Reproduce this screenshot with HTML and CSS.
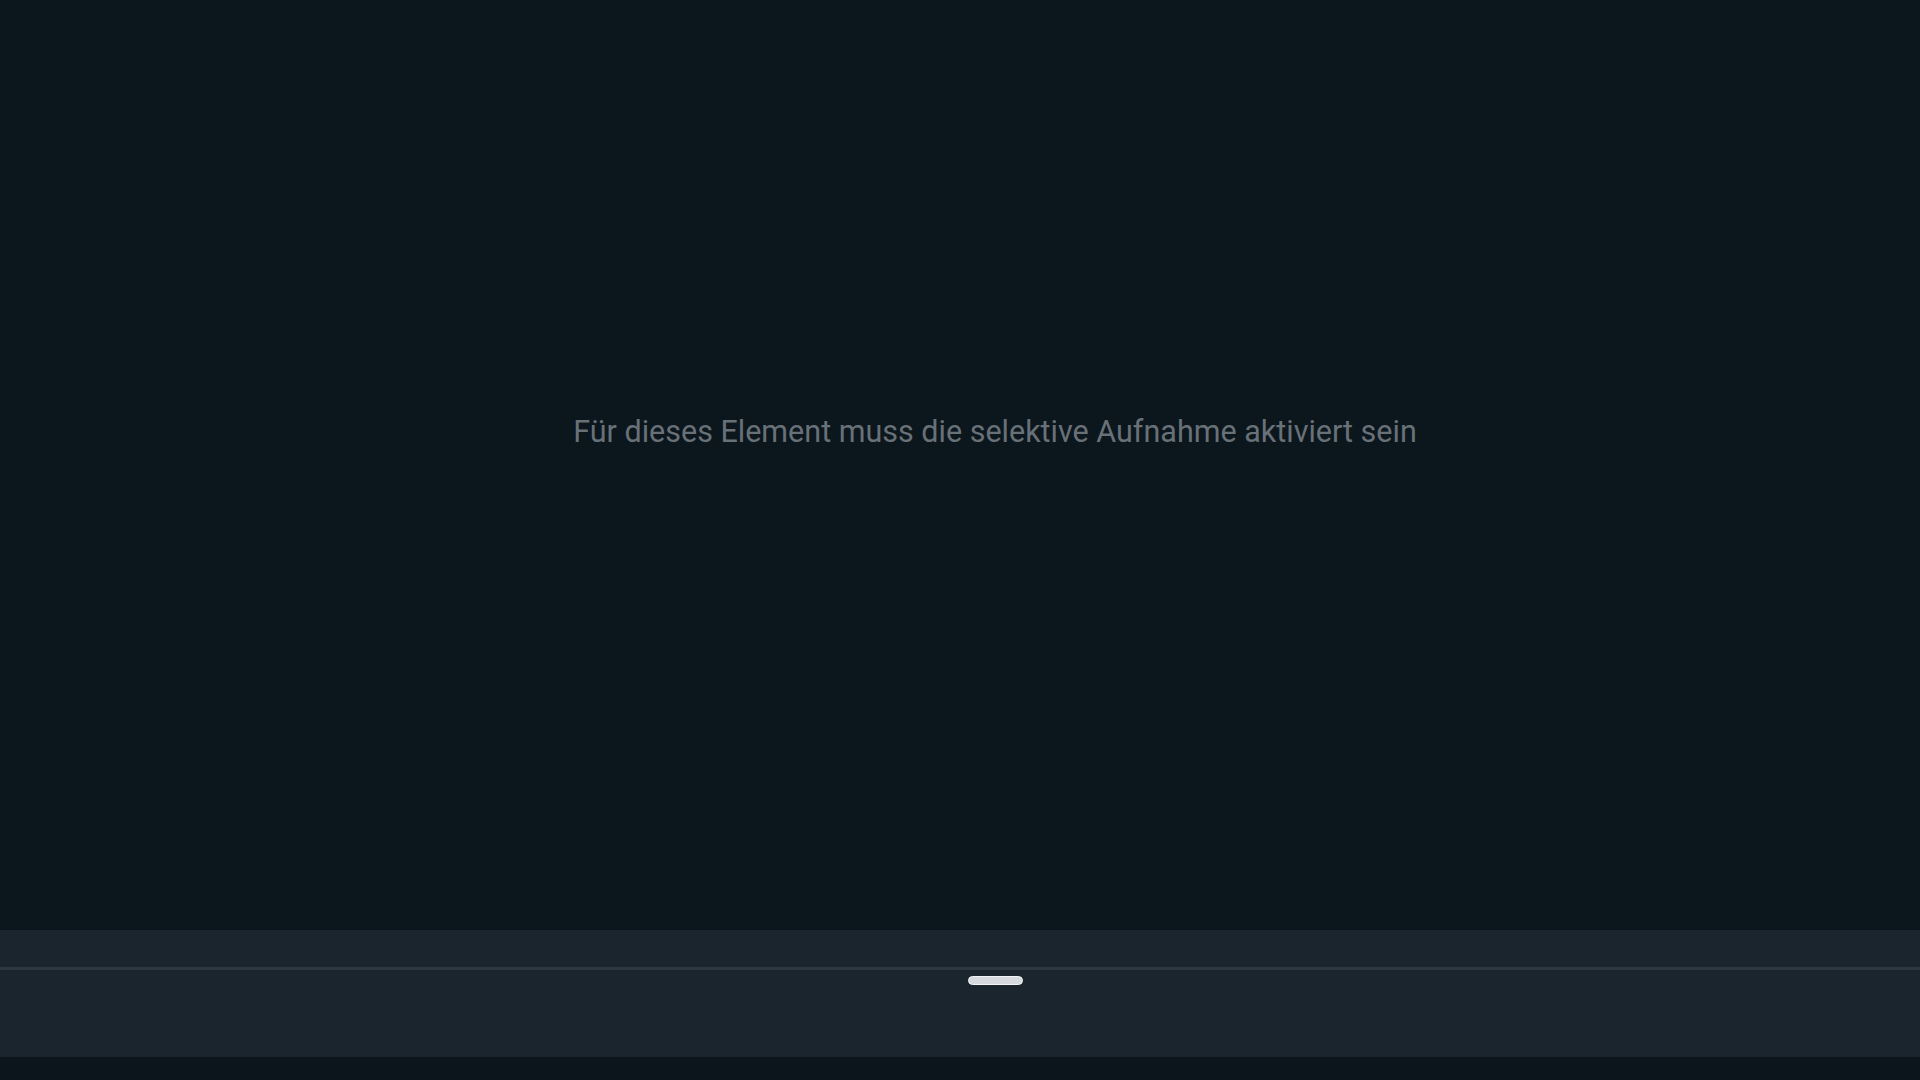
FILE: index.html
```html
<!DOCTYPE html>
<html lang="de">
<head>
<meta charset="utf-8">
<title>Selektive Aufnahme</title>
<link rel="stylesheet" href="styles.css">
</head>
<body>
<div class="screen">
  <main class="content">
    <p class="message">Für dieses Element muss die selektive Aufnahme aktiviert sein</p>
  </main>
  <section class="sheet">
    <div class="sheet-top"></div>
    <div class="sheet-divider"></div>
    <div class="sheet-body">
      <div class="handle"></div>
    </div>
  </section>
  <div class="bottom-strip"></div>
</div>
</body>
</html>
```
FILE: styles.css
```css
* { box-sizing: border-box; }
html, body {
  margin: 0;
  padding: 0;
  width: 1920px;
  height: 1080px;
  overflow: hidden;
  background: #0c161d;
  font-family: Roboto, "Liberation Sans", sans-serif;
}
.screen {
  display: flex;
  flex-direction: column;
  height: 1080px;
}
.content {
  flex: 1;
  display: flex;
  justify-content: center;
  align-items: flex-start;
  padding-top: 410px;
  padding-left: 70px;
  background: #0c161d;
}
.message {
  margin: 0;
  font-size: 30.5px;
  line-height: 44px;
  color: #687177;
  letter-spacing: 0;
}
.sheet {
  height: 127px;
  display: flex;
  flex-direction: column;
  background: #1b252e;
}
.sheet-top {
  height: 37px;
}
.sheet-divider {
  height: 3px;
  background: #2c3841;
}
.sheet-body {
  flex: 1;
  display: flex;
  justify-content: center;
  padding-top: 6px;
  padding-left: 70px;
}
.handle {
  width: 55px;
  height: 9px;
  border-radius: 5px;
  background: #d6dade;
  border: 1px solid #f2f4f5;
}
.bottom-strip {
  height: 23px;
  background: #0b151b;
}
```
